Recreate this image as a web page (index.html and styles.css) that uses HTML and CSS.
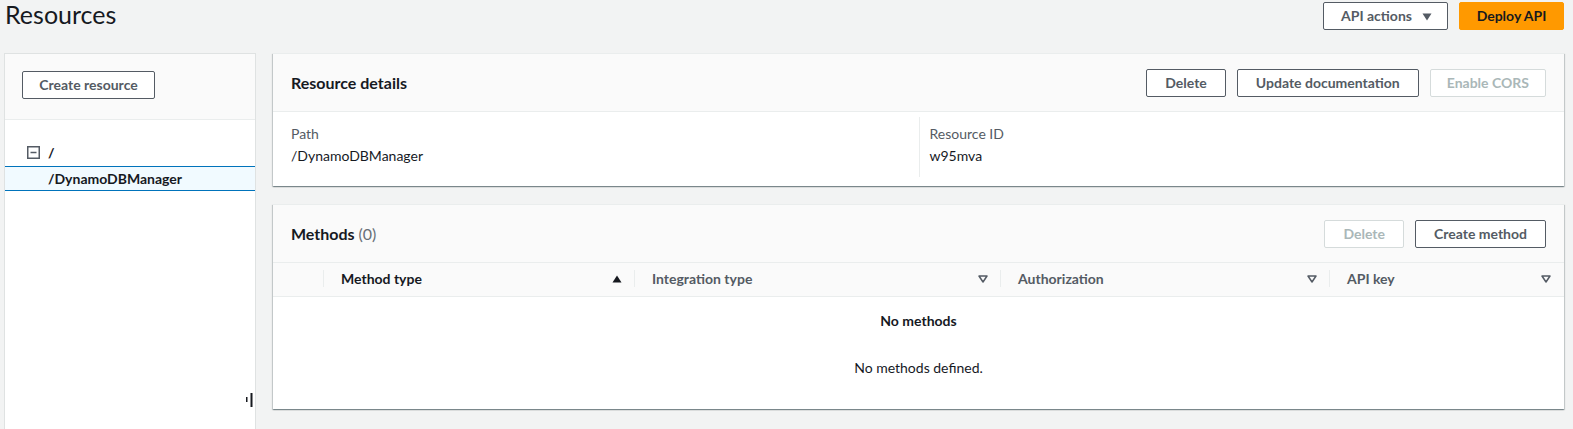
FILE: index.html
```html
<!DOCTYPE html>
<html lang="en">
<head>
<meta charset="utf-8">
<title>Resources</title>
<link rel="stylesheet" href="styles.css">
</head>
<body>
<div class="page">
  <header class="top">
    <h1 class="title">Resources</h1>
    <div class="top-actions">
      <button class="btn btn-dropdown"><span>API actions</span><svg class="caret" width="10" height="8" viewBox="0 0 10 8"><path d="M0.5 0.5 H9.5 L5 7.5 Z" fill="#545b64"/></svg></button>
      <button class="btn btn-primary">Deploy API</button>
    </div>
  </header>

  <div class="main">
    <aside class="tree-panel">
      <div class="tree-top">
        <button class="btn">Create resource</button>
      </div>
      <ul class="tree">
        <li class="node node-root">
          <svg class="toggle" width="13" height="13" viewBox="0 0 13 13"><rect x="0.75" y="0.75" width="11.5" height="11.5" fill="none" stroke="#545b64" stroke-width="1.5"/><path d="M3.5 6.5 H9.5" stroke="#545b64" stroke-width="1.5"/></svg>
          <span>/</span>
        </li>
        <li class="node node-selected"><span>/DynamoDBManager</span></li>
      </ul>
      <svg class="resize-mark" width="7" height="14" viewBox="0 0 7 14"><rect x="0" y="4" width="1.5" height="5" fill="#16191f"/><rect x="4.5" y="0" width="2" height="14" fill="#16191f"/></svg>
    </aside>

    <section class="content">
      <div class="card">
        <div class="card-head">
          <h2 class="card-title">Resource details</h2>
          <div class="btn-group">
            <button class="btn">Delete</button>
            <button class="btn">Update documentation</button>
            <button class="btn btn-disabled btn-cors">Enable CORS</button>
          </div>
        </div>
        <div class="kv">
          <div class="kv-col">
            <div class="kv-label">Path</div>
            <div class="kv-value">/DynamoDBManager</div>
          </div>
          <div class="kv-col kv-col-divided">
            <div class="kv-label">Resource ID</div>
            <div class="kv-value">w95mva</div>
          </div>
        </div>
      </div>

      <div class="card">
        <div class="card-head">
          <h2 class="card-title">Methods <span class="count">(0)</span></h2>
          <div class="btn-group">
            <button class="btn btn-disabled">Delete</button>
            <button class="btn">Create method</button>
          </div>
        </div>
        <div class="table-head">
          <div class="th th-select"></div>
          <div class="th th-sorted"><span>Method type</span>
            <svg class="sort" width="10" height="8" viewBox="0 0 10 8"><path d="M5 0.5 L9.5 7.5 H0.5 Z" fill="#16191f"/></svg>
          </div>
          <div class="th"><span>Integration type</span>
            <svg class="sort" width="10" height="8" viewBox="0 0 10 8"><path d="M1 1 H9 L5 7 Z" fill="none" stroke="#545b64" stroke-width="1.5" stroke-linejoin="round"/></svg>
          </div>
          <div class="th"><span>Authorization</span>
            <svg class="sort" width="10" height="8" viewBox="0 0 10 8"><path d="M1 1 H9 L5 7 Z" fill="none" stroke="#545b64" stroke-width="1.5" stroke-linejoin="round"/></svg>
          </div>
          <div class="th th-last"><span>API key</span>
            <svg class="sort" width="10" height="8" viewBox="0 0 10 8"><path d="M1 1 H9 L5 7 Z" fill="none" stroke="#545b64" stroke-width="1.5" stroke-linejoin="round"/></svg>
          </div>
        </div>
        <div class="empty">
          <div class="empty-title">No methods</div>
          <div class="empty-text">No methods defined.</div>
        </div>
      </div>
    </section>
  </div>
</div>
</body>
</html>
```

FILE: styles.css
```css
* { box-sizing: border-box; }

html, body {
  margin: 0;
  padding: 0;
  background: #f2f3f3;
  font-family: "Lato", "Roboto", "Liberation Sans", sans-serif;
  font-size: 14px;
  color: #16191f;
  overflow: hidden;
}

.page {
  padding: 0 9px 0 4px;
}

.top {
  height: 53px;
  padding-top: 2px;
  display: flex;
  justify-content: space-between;
  align-items: flex-start;
}

.title {
  margin: 0 0 0 1px;
  font-size: 25px;
  line-height: 24px;
  font-weight: 400;
  color: #16191f;
}

.top-actions {
  display: flex;
  gap: 11px;
}

.btn {
  height: 28px;
  padding: 0 18px;
  border: 1px solid #545b64;
  border-radius: 2px;
  background: #fff;
  color: #545b64;
  font-family: inherit;
  font-size: 14px;
  font-weight: 700;
  line-height: 26px;
  white-space: nowrap;
  display: inline-flex;
  align-items: center;
  justify-content: center;
}

.btn-dropdown {
  width: 125px;
  padding: 0 17px 0 19px;
  gap: 10px;
}

.caret {
  display: block;
  flex-shrink: 0;
  margin-top: 1px;
}

.btn-primary {
  width: 105px;
  background: #ff9900;
  border-color: #ff9900;
  color: #16191f;
}

.btn-disabled {
  border-color: #d5dbdb;
  color: #aab7b8;
}

.btn-cors {
  padding: 0 16px;
}

.main {
  display: grid;
  grid-template-columns: 252px 1fr;
  column-gap: 17px;
  align-items: start;
}

/* left tree panel */
.tree-panel {
  position: relative;
  height: 376px;
  background: #fff;
  border: 1px solid #dfe2e2;
  border-bottom: 0;
}

.tree-top {
  padding: 17px 17px 20px;
  background: #fafafa;
  border-bottom: 1px solid #eaeded;
}

.tree-top .btn {
  width: 133px;
}

.tree {
  list-style: none;
  margin: 0;
  padding: 19px 0 0;
}

.node {
  display: flex;
  align-items: center;
  font-weight: 700;
  color: #16191f;
}

.node-root {
  height: 27px;
  padding-left: 22px;
  gap: 8px;
}

.toggle { display: block; }

.node-selected {
  height: 25px;
  padding-left: 43px;
  background: #f1faff;
  border-top: 1px solid #0073bb;
  border-bottom: 1px solid #0073bb;
}

.resize-mark {
  position: absolute;
  left: 241px;
  top: 339px;
}

/* right content */
.content {
  display: flex;
  flex-direction: column;
  gap: 18px;
}

.card {
  background: #fff;
  border-top: 1px solid #eaeded;
  box-shadow: 0 1px 1px 0 rgba(0, 28, 36, 0.3), 1px 1px 1px 0 rgba(0, 28, 36, 0.15), -1px 1px 1px 0 rgba(0, 28, 36, 0.15);
}

.card-head {
  height: 58px;
  padding: 0 18px;
  background: #fafafa;
  border-bottom: 1px solid #eaeded;
  display: flex;
  align-items: center;
  justify-content: space-between;
}

.card-title {
  margin: 0;
  font-size: 16px;
  font-weight: 700;
  line-height: 22px;
  color: #16191f;
}

.count {
  font-weight: 400;
  color: #687078;
}

.btn-group {
  display: flex;
  gap: 11px;
}

.kv {
  display: grid;
  grid-template-columns: 1fr 1fr;
  padding: 5px 18px 9px;
}

.kv-col {
  padding: 6px 0 10px;
}

.kv-col-divided {
  border-left: 1px solid #eaeded;
  padding-left: 10px;
}

.kv-label {
  line-height: 22px;
  color: #545b64;
}

.kv-value {
  line-height: 22px;
  color: #16191f;
}

.table-head {
  height: 34px;
  display: grid;
  grid-template-columns: 50px 311px 366px 329px 1fr;
  align-items: center;
  background: #fafafa;
  border-bottom: 1px solid #eaeded;
}

.th {
  height: 17px;
  margin-top: -2px;
  display: flex;
  align-items: center;
  justify-content: space-between;
  padding: 0 12px 0 17px;
  border-left: 1px solid #eaeded;
  font-weight: 700;
  line-height: 17px;
  color: #545b64;
}

.th-select {
  border-left: 0;
}

.th-sorted { color: #16191f; }

.th-last { padding-right: 13px; }

.sort { display: block; }

.empty {
  text-align: center;
  padding: 13px 0 30px;
}

.empty-title {
  font-weight: 700;
  line-height: 22px;
}

.empty-text {
  margin-top: 25px;
  line-height: 22px;
}
```
